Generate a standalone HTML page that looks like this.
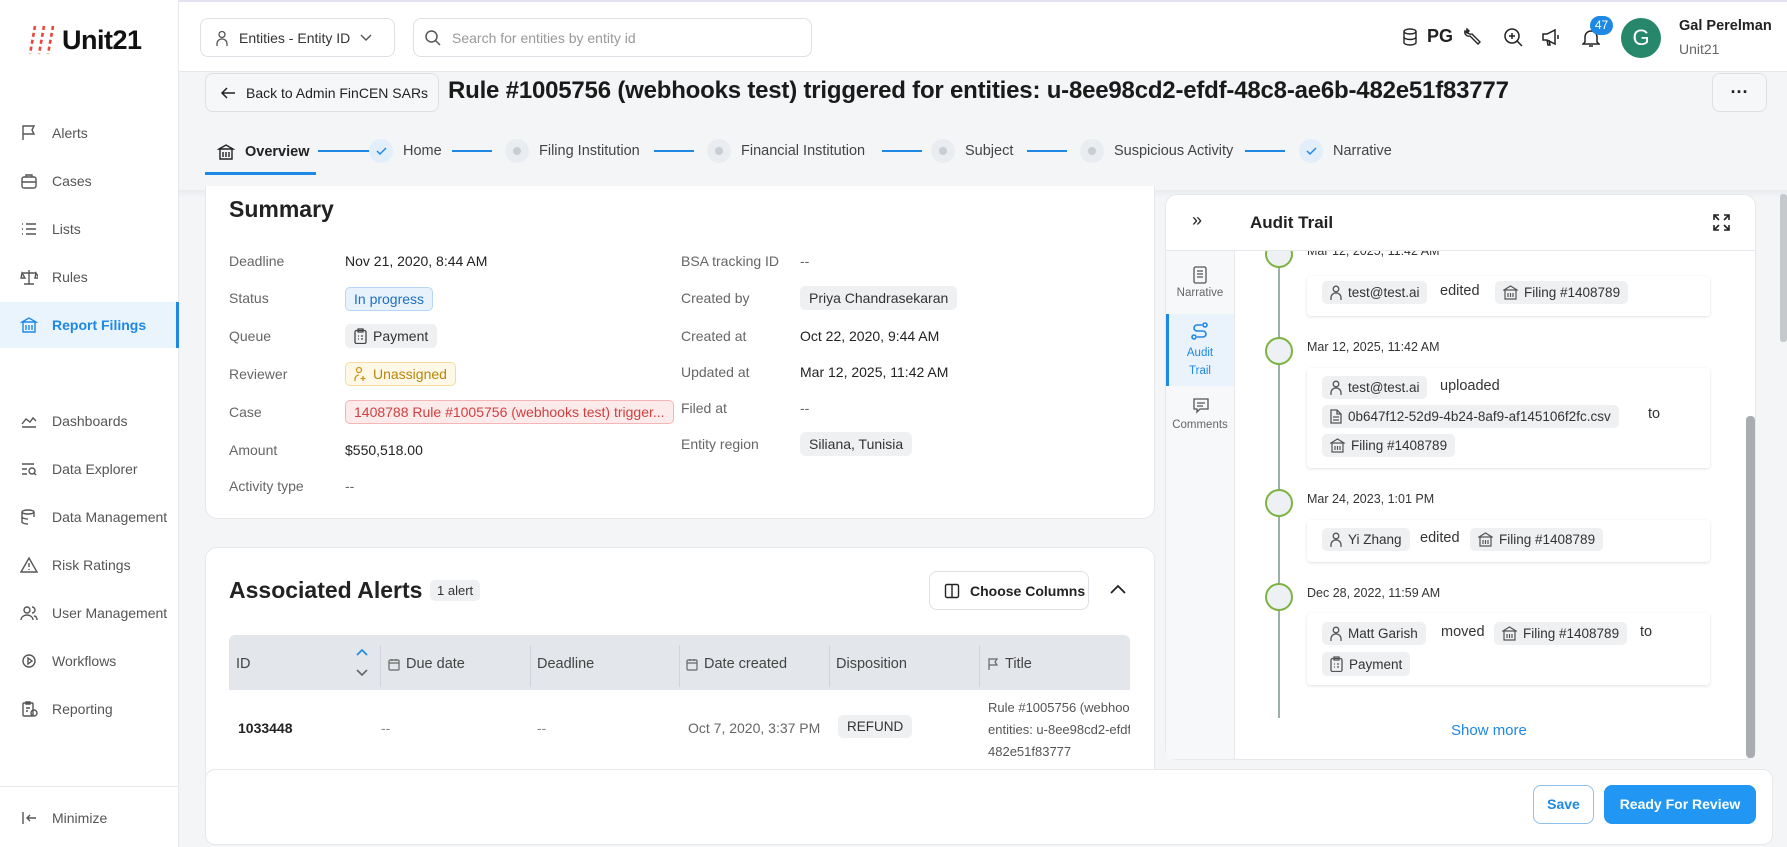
<!DOCTYPE html>
<html><head><meta charset="utf-8"><style>
*{box-sizing:border-box;margin:0;padding:0}
body{width:1787px;height:847px;overflow:hidden;font-family:"Liberation Sans",sans-serif;color:#222;background:#f3f5f7;position:relative;font-size:14px}
.abs{position:absolute}
svg{display:block}
.side{left:0;top:0;width:179px;height:847px;background:#fff;border-right:1px solid #e6e8ec}
.nav{position:absolute;left:0;width:179px;height:46px;display:flex;align-items:center;padding-left:20px;color:#555;font-size:14px}
.nav svg{margin-right:14px}
.nav.act{background:#eaf4fd;color:#1e88e5;font-weight:bold;border-right:3px solid #1e88e5}
.top{left:179px;top:0;right:0;height:72px;background:#fff;border-bottom:1px solid #e6e8ec;border-top:2px solid #e4e2f2}
.card{background:#fff;border:1px solid #e6e8ec;border-radius:12px}
.lbl{position:absolute;color:#666;font-size:14px}
.val{position:absolute;color:#222;font-size:14px}
.chip{position:absolute;background:#eef0f2;border-radius:5px;padding:4px 9px;font-size:14px;color:#333;display:flex;align-items:center;gap:6px;white-space:nowrap}
.step{position:absolute;top:139px;height:24px;display:flex;align-items:center;font-size:14.5px;color:#444}
.sc{width:24px;height:24px;border-radius:50%;background:#e9edf1;display:flex;align-items:center;justify-content:center;margin-right:10px}
.sline{position:absolute;top:150px;height:2px;background:#1e88e5}
.th{position:absolute;top:656px;font-size:14.5px;color:#444;display:flex;align-items:center;gap:6px}
.tsep{position:absolute;top:645px;width:1px;height:42px;background:#cfd4da}
.tl{position:absolute;width:28px;height:28px;border-radius:50%;border:2.5px solid #7cb342;background:#eef1f4;left:1265px}
.ent{position:absolute;left:1307px;width:403px;background:#fff;box-shadow:0 1px 3px rgba(0,0,0,.12);border-radius:4px}
.date{position:absolute;left:1307px;font-size:12.5px;color:#333}
.ech{position:absolute;background:#eef0f2;border-radius:5px;padding:4px 8px;font-size:13.5px;color:#333;display:flex;align-items:center;gap:6px;white-space:nowrap}
.etx{position:absolute;font-size:14.5px;color:#333}
</style></head><body>

<!-- sidebar -->
<div class="abs side">
  <div class="abs" style="left:28px;top:24px;display:flex;align-items:center">
    <svg width="32" height="32" viewBox="0 0 32 32"><g stroke="#e8473a" stroke-width="2.6" stroke-dasharray="4 3"><line x1="7" y1="2" x2="2" y2="30"/><line x1="16" y1="2" x2="11" y2="30"/><line x1="25" y1="2" x2="20" y2="30"/></g></svg>
    <span style="font-size:27px;font-weight:bold;color:#111;margin-left:2px;letter-spacing:-.5px">Unit21</span>
  </div>
  <div class="nav" style="top:110px"><svg width="18" height="18" viewBox="0 0 18 18" fill="none" stroke="#555" stroke-width="1.4"><path d="M3 16V2h11l-2 4 2 4H3"/></svg>Alerts</div>
  <div class="nav" style="top:158px"><svg width="18" height="18" viewBox="0 0 18 18" fill="none" stroke="#555" stroke-width="1.4"><rect x="2" y="5" width="14" height="11" rx="2"/><path d="M6 5V3h6v2M2 10h14"/></svg>Cases</div>
  <div class="nav" style="top:206px"><svg width="18" height="18" viewBox="0 0 18 18" fill="none" stroke="#555" stroke-width="1.4"><path d="M6 4h10M6 9h10M6 14h10M2 4h1M2 9h1M2 14h1"/></svg>Lists</div>
  <div class="nav" style="top:254px"><svg width="18" height="18" viewBox="0 0 18 18" fill="none" stroke="#555" stroke-width="1.4"><path d="M9 2v14M4 16h10M2 5h14M2 5l-1 5h4zM16 5l-1 5h4z"/></svg>Rules</div>
  <div class="nav act" style="top:302px"><svg width="18" height="18" viewBox="0 0 18 18" fill="none" stroke="#1e88e5" stroke-width="1.4"><path d="M2 6L9 2l7 4zM3 6h12v10H3zM6 9v5M9 9v5M12 9v5"/></svg>Report Filings</div>
  <div class="nav" style="top:398px"><svg width="18" height="18" viewBox="0 0 18 18" fill="none" stroke="#555" stroke-width="1.4"><path d="M2 12l4-5 4 3 3-4 3 3M2 15h14"/></svg>Dashboards</div>
  <div class="nav" style="top:446px"><svg width="18" height="18" viewBox="0 0 18 18" fill="none" stroke="#555" stroke-width="1.4"><path d="M2 4h12M2 9h5M2 14h5"/><circle cx="12" cy="11" r="3"/><path d="M14 13l2 2"/></svg>Data Explorer</div>
  <div class="nav" style="top:494px"><svg width="18" height="18" viewBox="0 0 18 18" fill="none" stroke="#555" stroke-width="1.4"><ellipse cx="8" cy="4" rx="6" ry="2"/><path d="M2 4v10c0 1 3 2 6 2M14 4v5M2 9c0 1 3 2 6 2"/></svg>Data Management</div>
  <div class="nav" style="top:542px"><svg width="18" height="18" viewBox="0 0 18 18" fill="none" stroke="#555" stroke-width="1.4"><path d="M9 2l8 14H1z M9 7v4M9 13v1"/></svg>Risk Ratings</div>
  <div class="nav" style="top:590px"><svg width="18" height="18" viewBox="0 0 18 18" fill="none" stroke="#555" stroke-width="1.4"><circle cx="7" cy="6" r="3"/><path d="M1 16c0-3 3-5 6-5s6 2 6 5M12 3a3 3 0 010 6M17 16c0-2-1-4-3-4"/></svg>User Management</div>
  <div class="nav" style="top:638px"><svg width="18" height="18" viewBox="0 0 18 18" fill="none" stroke="#555" stroke-width="1.4"><circle cx="9" cy="9" r="6"/><path d="M8 6v6l4-3z"/></svg>Workflows</div>
  <div class="nav" style="top:686px"><svg width="18" height="18" viewBox="0 0 18 18" fill="none" stroke="#555" stroke-width="1.4"><rect x="3" y="3" width="10" height="13" rx="1"/><path d="M6 2h4v2H6zM6 8h4M6 11h2"/><circle cx="14" cy="13" r="3"/></svg>Reporting</div>
  <div class="abs" style="left:0;top:786px;width:179px;height:1px;background:#e6e8ec"></div>
  <div class="nav" style="top:795px"><svg width="18" height="18" viewBox="0 0 18 18" fill="none" stroke="#555" stroke-width="1.4"><path d="M3 3v12M16 9H7M10 6L7 9l3 3"/></svg>Minimize</div>
</div>

<!-- header -->
<div class="abs top"></div>
<div class="abs" style="left:200px;top:18px;width:195px;height:39px;border:1px solid #dde0e4;border-radius:8px;background:#fff;display:flex;align-items:center;padding-left:14px;font-size:14px;color:#333">
  <svg width="14" height="16" viewBox="0 0 14 16" fill="none" stroke="#555" stroke-width="1.3"><circle cx="7" cy="4.5" r="3"/><path d="M2 16v-2c0-3 2-5 5-5s5 2 5 5v2"/></svg>
  <span style="margin-left:10px">Entities - Entity ID</span>
  <svg style="margin-left:10px" width="12" height="8" viewBox="0 0 12 8" fill="none" stroke="#555" stroke-width="1.4"><path d="M1 1l5 5 5-5"/></svg>
</div>
<div class="abs" style="left:413px;top:18px;width:399px;height:39px;border:1px solid #dde0e4;border-radius:8px;background:#fff;display:flex;align-items:center;padding-left:10px;font-size:14px;color:#999">
  <svg width="18" height="18" viewBox="0 0 18 18" fill="none" stroke="#555" stroke-width="1.5"><circle cx="7.5" cy="7.5" r="5.5"/><path d="M11.5 11.5L16 16"/></svg>
  <span style="margin-left:10px">Search for entities by entity id</span>
</div>
<svg class="abs" style="left:1402px;top:28px" width="16" height="18" viewBox="0 0 16 18" fill="none" stroke="#222" stroke-width="1.4"><ellipse cx="8" cy="3.5" rx="6" ry="2.5"/><path d="M2 3.5v11c0 1.4 2.7 2.5 6 2.5s6-1.1 6-2.5v-11M2 9c0 1.4 2.7 2.5 6 2.5s6-1.1 6-2.5"/></svg>
<div class="abs" style="left:1427px;top:26px;font-size:18px;font-weight:bold;color:#222">PG</div>
<svg class="abs" style="left:1463px;top:27px" width="20" height="20" viewBox="0 0 20 20" fill="none" stroke="#222" stroke-width="1.4"><path d="M4 2a4 4 0 005 5l8 8-2 2-8-8a4 4 0 01-5-5l2 2 2-2z"/></svg>
<svg class="abs" style="left:1502px;top:26px" width="22" height="22" viewBox="0 0 22 22" fill="none" stroke="#222" stroke-width="1.5"><circle cx="10" cy="10" r="7"/><path d="M15 15l5 5M10 7v6M7 10h6"/></svg>
<svg class="abs" style="left:1541px;top:28px" width="20" height="18" viewBox="0 0 20 18" fill="none" stroke="#222" stroke-width="1.5"><path d="M2 6h4l8-4v14l-8-4H2zM6 12l1 5h2l-1-5M17 7v4"/></svg>
<svg class="abs" style="left:1582px;top:28px" width="18" height="20" viewBox="0 0 18 20" fill="none" stroke="#222" stroke-width="1.5"><path d="M3 14V9a6 6 0 0112 0v5l2 2H1zM7 18h4"/></svg>
<div class="abs" style="left:1590px;top:16px;width:23px;height:19px;border-radius:10px;background:#1e88e5;color:#fff;font-size:12px;text-align:center;line-height:19px">47</div>
<div class="abs" style="left:1621px;top:18px;width:40px;height:40px;border-radius:50%;background:#26876b;color:#fff;font-size:22px;text-align:center;line-height:40px">G</div>
<div class="abs" style="left:1679px;top:18px;font-size:14.5px;font-weight:bold;color:#222">Gal Perelman</div>
<div class="abs" style="left:1679px;top:41px;font-size:14px;color:#666">Unit21</div>

<!-- title row -->
<div class="abs" style="left:205px;top:73px;width:234px;height:39px;border:1px solid #dde0e4;border-radius:8px;background:#f6f7f9;display:flex;align-items:center;padding-left:14px;font-size:14px;color:#222">
  <svg width="16" height="14" viewBox="0 0 16 14" fill="none" stroke="#222" stroke-width="1.5"><path d="M15 7H2M7 2L2 7l5 5"/></svg><span style="margin-left:10px">Back to Admin FinCEN SARs</span>
</div>
<div class="abs" style="left:448px;top:77px;font-size:24px;font-weight:bold;color:#1a1a1a;white-space:nowrap;letter-spacing:-.2px">Rule #1005756 (webhooks test) triggered for entities: u-8ee98cd2-efdf-48c8-ae6b-482e51f83777</div>
<div class="abs" style="left:1712px;top:73px;width:55px;height:39px;border:1px solid #dde0e4;border-radius:8px;background:#f6f7f9;text-align:center;font-size:18px;line-height:36px;font-weight:bold">···</div>

<!-- stepper -->
<div class="step" style="left:217px;top:140px;color:#222;font-weight:bold"><svg style="margin-right:10px" width="18" height="18" viewBox="0 0 18 18" fill="none" stroke="#222" stroke-width="1.4"><path d="M2 6L9 2l7 4zM3 6h12v10H3zM6 9v5M9 9v5M12 9v5"/></svg>Overview</div>
<div class="abs" style="left:205px;top:172px;width:111px;height:3px;background:#1e88e5"></div>
<div class="sline" style="left:318px;width:56px"></div>
<div class="step" style="left:369px"><div class="sc" style="background:#e3eefb"><svg width="11" height="9" viewBox="0 0 11 9" fill="none" stroke="#1e88e5" stroke-width="1.5"><path d="M1 4l3 3 6-6"/></svg></div>Home</div>
<div class="sline" style="left:452px;width:40px"></div>
<div class="step" style="left:505px"><div class="sc"><div style="width:8px;height:8px;border-radius:50%;background:#c8cdd2"></div></div>Filing Institution</div>
<div class="sline" style="left:654px;width:40px"></div>
<div class="step" style="left:707px"><div class="sc"><div style="width:8px;height:8px;border-radius:50%;background:#c8cdd2"></div></div>Financial Institution</div>
<div class="sline" style="left:882px;width:40px"></div>
<div class="step" style="left:931px"><div class="sc"><div style="width:8px;height:8px;border-radius:50%;background:#c8cdd2"></div></div>Subject</div>
<div class="sline" style="left:1027px;width:40px"></div>
<div class="step" style="left:1080px"><div class="sc"><div style="width:8px;height:8px;border-radius:50%;background:#c8cdd2"></div></div>Suspicious Activity</div>
<div class="sline" style="left:1245px;width:40px"></div>
<div class="step" style="left:1299px"><div class="sc" style="background:#e3eefb"><svg width="11" height="9" viewBox="0 0 11 9" fill="none" stroke="#1e88e5" stroke-width="1.5"><path d="M1 4l3 3 6-6"/></svg></div>Narrative</div>
<div class="abs" style="left:179px;top:190px;width:1608px;height:8px;background:linear-gradient(#e9ecef,#f3f5f7)"></div>

<!-- summary card -->
<div class="abs card" style="left:205px;top:186px;width:950px;height:333px;border-top:none;border-radius:0 0 12px 12px"></div>
<div class="abs" style="left:229px;top:196px;font-size:23px;font-weight:bold;color:#222">Summary</div>
<div class="lbl" style="left:229px;top:253px">Deadline</div><div class="val" style="left:345px;top:253px">Nov 21, 2020, 8:44 AM</div>
<div class="lbl" style="left:229px;top:290px">Status</div><div class="chip" style="left:345px;top:287px;background:#e8f2fd;border:1px solid #b7d6f5;color:#1e6fc0;padding:3px 8px">In progress</div>
<div class="lbl" style="left:229px;top:328px">Queue</div><div class="chip" style="left:345px;top:324px"><svg width="13" height="16" viewBox="0 0 13 16" fill="none" stroke="#444" stroke-width="1.3"><rect x="1" y="2.5" width="11" height="13" rx="1.5"/><path d="M4 1h5v3H4zM4 8h1M4 11h1M7 8h2M7 11h2"/></svg>Payment</div>
<div class="lbl" style="left:229px;top:366px">Reviewer</div><div class="chip" style="left:345px;top:362px;background:#fff8e6;border:1px solid #f5dc9c;color:#b8860b;padding:3px 8px"><svg width="13" height="16" viewBox="0 0 13 16" fill="none" stroke="#c9961a" stroke-width="1.3"><circle cx="5" cy="4" r="2.5"/><path d="M1 15v-2c0-2 2-4 4-4M9 10v5M6.5 12.5h5"/></svg>Unassigned</div>
<div class="lbl" style="left:229px;top:404px">Case</div><div class="chip" style="left:345px;top:400px;background:#fdeaea;border:1px solid #f2b6b6;color:#d04040;padding:3px 8px">1408788 Rule #1005756 (webhooks test) trigger...</div>
<div class="lbl" style="left:229px;top:442px">Amount</div><div class="val" style="left:345px;top:442px">$550,518.00</div>
<div class="lbl" style="left:229px;top:478px">Activity type</div><div class="lbl" style="left:345px;top:478px">--</div>
<div class="lbl" style="left:681px;top:253px">BSA tracking ID</div><div class="lbl" style="left:800px;top:253px">--</div>
<div class="lbl" style="left:681px;top:290px">Created by</div><div class="chip" style="left:800px;top:286px">Priya Chandrasekaran</div>
<div class="lbl" style="left:681px;top:328px">Created at</div><div class="val" style="left:800px;top:328px">Oct 22, 2020, 9:44 AM</div>
<div class="lbl" style="left:681px;top:364px">Updated at</div><div class="val" style="left:800px;top:364px">Mar 12, 2025, 11:42 AM</div>
<div class="lbl" style="left:681px;top:400px">Filed at</div><div class="lbl" style="left:800px;top:400px">--</div>
<div class="lbl" style="left:681px;top:436px">Entity region</div><div class="chip" style="left:800px;top:432px">Siliana, Tunisia</div>

<!-- associated alerts -->
<div class="abs card" style="left:205px;top:547px;width:950px;height:240px"></div>
<div class="abs" style="left:229px;top:577px;font-size:23px;font-weight:bold;color:#222">Associated Alerts</div>
<div class="chip" style="left:430px;top:580px;font-size:13px;padding:3px 7px">1 alert</div>
<div class="abs" style="left:929px;top:571px;width:160px;height:39px;border:1px solid #dde0e4;border-radius:8px;background:#fff;display:flex;align-items:center;padding-left:14px;font-size:14px;font-weight:bold;color:#222"><svg width="16" height="16" viewBox="0 0 16 16" fill="none" stroke="#222" stroke-width="1.4"><rect x="1.5" y="1.5" width="13" height="13" rx="1.5"/><path d="M8 1.5v13"/></svg><span style="margin-left:10px">Choose Columns</span></div>
<svg class="abs" style="left:1110px;top:584px" width="16" height="10" viewBox="0 0 16 10" fill="none" stroke="#222" stroke-width="1.8"><path d="M1 9l7-7 7 7"/></svg>
<div class="abs" style="left:229px;top:635px;width:901px;height:55px;background:#e3e6ea;border-radius:6px 6px 0 0"></div>
<div class="abs" style="left:229px;top:690px;width:901px;height:70px;background:#fff"></div>
<div class="th" style="left:236px">ID</div>
<svg class="abs" style="left:356px;top:648px" width="12" height="30" viewBox="0 0 12 30" fill="none" stroke-width="1.6"><path d="M1 7l5-5 5 5" stroke="#1e88e5"/><path d="M1 22l5 5 5-5" stroke="#666"/></svg>
<div class="tsep" style="left:380px"></div><div class="th" style="left:388px"><svg width="12" height="13" viewBox="0 0 12 13" fill="none" stroke="#666" stroke-width="1.2"><rect x="1" y="2" width="10" height="10" rx="1"/><path d="M1 5h10M4 1v2M8 1v2"/></svg>Due date</div>
<div class="tsep" style="left:530px"></div><div class="th" style="left:537px">Deadline</div>
<div class="tsep" style="left:679px"></div><div class="th" style="left:686px"><svg width="12" height="13" viewBox="0 0 12 13" fill="none" stroke="#666" stroke-width="1.2"><rect x="1" y="2" width="10" height="10" rx="1"/><path d="M1 5h10M4 1v2M8 1v2"/></svg>Date created</div>
<div class="tsep" style="left:829px"></div><div class="th" style="left:836px">Disposition</div>
<div class="tsep" style="left:979px"></div><div class="th" style="left:987px"><svg width="12" height="13" viewBox="0 0 12 13" fill="none" stroke="#666" stroke-width="1.2"><path d="M2 12V1h8l-2 3 2 3H2"/></svg>Title</div>
<div class="abs" style="left:238px;top:720px;font-size:14px;font-weight:bold;color:#222">1033448</div>
<div class="abs" style="left:381px;top:720px;color:#888">--</div>
<div class="abs" style="left:537px;top:720px;color:#888">--</div>
<div class="abs" style="left:688px;top:720px;color:#666">Oct 7, 2020, 3:37 PM</div>
<div class="chip" style="left:838px;top:715px;font-size:13.5px">REFUND</div>
<div class="abs" style="left:988px;top:697px;width:142px;overflow:hidden;white-space:nowrap;color:#555;font-size:13px;line-height:22px">Rule #1005756 (webhooks test)<br>entities: u-8ee98cd2-efdf<br>482e51f83777</div>

<!-- audit trail -->
<div class="abs card" style="left:1165px;top:194px;width:591px;height:566px;overflow:hidden"></div>
<div class="abs" style="left:1166px;top:250px;width:69px;height:509px;background:#f7f8fa;border-right:1px solid #e6e8ec"></div>

<div class="abs" style="left:1278px;top:251px;width:2px;height:467px;background:#9bb0a8"></div>
<div class="tl" style="top:240px"></div>
<div class="date" style="top:244px">Mar 12, 2025, 11:42 AM</div>
<div class="tl" style="top:337px"></div>
<div class="tl" style="top:489px"></div>
<div class="tl" style="top:583px"></div>

<!-- audit header drawn over -->
<div class="abs" style="left:1166px;top:195px;width:589px;height:56px;background:#fff;border-bottom:1px solid #e6e8ec;border-radius:12px 12px 0 0"></div>
<div class="abs" style="left:1192px;top:210px;font-size:18px;color:#222">»</div>
<div class="abs" style="left:1250px;top:213px;font-size:17px;font-weight:bold;color:#222">Audit Trail</div>
<svg class="abs" style="left:1713px;top:214px" width="17" height="17" viewBox="0 0 17 17" fill="none" stroke="#222" stroke-width="1.6"><path d="M1 6V1h5M1 1l5 5M16 6V1h-5M16 1l-5 5M1 11v5h5M1 16l5-5M16 11v5h-5M16 16l-5-5"/></svg>

<svg class="abs" style="left:1193px;top:266px" width="14" height="18" viewBox="0 0 14 18" fill="none" stroke="#555" stroke-width="1.3"><rect x="1" y="1" width="12" height="16" rx="1.5"/><path d="M4 5h6M4 8h6M4 11h6"/></svg>
<div class="abs" style="left:1166px;top:287px;width:68px;text-align:center;font-size:11.5px;color:#666">Narrative</div>
<div class="abs" style="left:1166px;top:314px;width:68px;height:72px;background:#eaf3fc;border-left:3px solid #1e88e5"></div>
<svg class="abs" style="left:1191px;top:322px" width="18" height="18" viewBox="0 0 18 18" fill="none" stroke="#1e88e5" stroke-width="1.6"><circle cx="14" cy="3" r="2"/><circle cx="3" cy="15" r="2"/><path d="M11 3H6a3 3 0 000 6h6a3 3 0 010 6H6"/></svg>
<div class="abs" style="left:1166px;top:344px;width:68px;text-align:center;font-size:11.5px;color:#1e88e5;line-height:18px">Audit<br>Trail</div>
<svg class="abs" style="left:1193px;top:398px" width="16" height="16" viewBox="0 0 16 16" fill="none" stroke="#555" stroke-width="1.3"><path d="M1 1h14v10H7l-3 3v-3H1z M4 5h8M4 8h6"/></svg>
<div class="abs" style="left:1166px;top:419px;width:68px;text-align:center;font-size:11.5px;color:#666">Comments</div>

<div class="ent" style="top:276px;height:40px"></div>
<div class="ech" style="left:1322px;top:281px"><svg width="12" height="15" viewBox="0 0 12 15" fill="none" stroke="#555" stroke-width="1.3"><circle cx="6" cy="4" r="2.8"/><path d="M1 15v-2c0-3 2-5 5-5s5 2 5 5v2"/></svg>test@test.ai</div>
<div class="etx" style="left:1440px;top:283px">edited</div>
<div class="ech" style="left:1495px;top:281px"><svg width="15" height="15" viewBox="0 0 15 15" fill="none" stroke="#555" stroke-width="1.2"><path d="M1 5L7.5 1 14 5zM2 5h11v9H2zM5 8v4M7.5 8v4M10 8v4"/></svg>Filing #1408789</div>

<div class="date" style="top:340px">Mar 12, 2025, 11:42 AM</div>
<div class="ent" style="top:368px;height:100px"></div>
<div class="ech" style="left:1322px;top:376px"><svg width="12" height="15" viewBox="0 0 12 15" fill="none" stroke="#555" stroke-width="1.3"><circle cx="6" cy="4" r="2.8"/><path d="M1 15v-2c0-3 2-5 5-5s5 2 5 5v2"/></svg>test@test.ai</div>
<div class="etx" style="left:1440px;top:378px">uploaded</div>
<div class="ech" style="left:1322px;top:405px"><svg width="12" height="15" viewBox="0 0 12 15" fill="none" stroke="#555" stroke-width="1.3"><path d="M1 1h6l4 4v9H1zM7 1v4h4M3 8h6M3 11h6"/></svg>0b647f12-52d9-4b24-8af9-af145106f2fc.csv</div>
<div class="etx" style="left:1648px;top:406px">to</div>
<div class="ech" style="left:1322px;top:434px"><svg width="15" height="15" viewBox="0 0 15 15" fill="none" stroke="#555" stroke-width="1.2"><path d="M1 5L7.5 1 14 5zM2 5h11v9H2zM5 8v4M7.5 8v4M10 8v4"/></svg>Filing #1408789</div>

<div class="date" style="top:492px">Mar 24, 2023, 1:01 PM</div>
<div class="ent" style="top:520px;height:42px"></div>
<div class="ech" style="left:1322px;top:528px"><svg width="12" height="15" viewBox="0 0 12 15" fill="none" stroke="#555" stroke-width="1.3"><circle cx="6" cy="4" r="2.8"/><path d="M1 15v-2c0-3 2-5 5-5s5 2 5 5v2"/></svg>Yi Zhang</div>
<div class="etx" style="left:1420px;top:530px">edited</div>
<div class="ech" style="left:1470px;top:528px"><svg width="15" height="15" viewBox="0 0 15 15" fill="none" stroke="#555" stroke-width="1.2"><path d="M1 5L7.5 1 14 5zM2 5h11v9H2zM5 8v4M7.5 8v4M10 8v4"/></svg>Filing #1408789</div>

<div class="date" style="top:586px">Dec 28, 2022, 11:59 AM</div>
<div class="ent" style="top:613px;height:72px"></div>
<div class="ech" style="left:1322px;top:622px"><svg width="12" height="15" viewBox="0 0 12 15" fill="none" stroke="#555" stroke-width="1.3"><circle cx="6" cy="4" r="2.8"/><path d="M1 15v-2c0-3 2-5 5-5s5 2 5 5v2"/></svg>Matt Garish</div>
<div class="etx" style="left:1441px;top:624px">moved</div>
<div class="ech" style="left:1494px;top:622px"><svg width="15" height="15" viewBox="0 0 15 15" fill="none" stroke="#555" stroke-width="1.2"><path d="M1 5L7.5 1 14 5zM2 5h11v9H2zM5 8v4M7.5 8v4M10 8v4"/></svg>Filing #1408789</div>
<div class="etx" style="left:1640px;top:624px">to</div>
<div class="ech" style="left:1322px;top:652px"><svg width="13" height="16" viewBox="0 0 13 16" fill="none" stroke="#555" stroke-width="1.3"><rect x="1" y="2.5" width="11" height="13" rx="1.5"/><path d="M4 1h5v3H4zM4 8h1M4 11h1M7 8h2M7 11h2"/></svg>Payment</div>
<div class="abs" style="left:1451px;top:722px;font-size:15px;color:#1e88e5">Show more</div>
<div class="abs" style="left:1746px;top:416px;width:9px;height:342px;background:#a9adb2;border-radius:4px"></div>
<div class="abs" style="left:1780px;top:194px;width:7px;height:148px;background:#c5c8cc;border-radius:3px"></div>

<!-- bottom bar -->
<div class="abs card" style="left:205px;top:769px;width:1568px;height:76px;border-radius:10px"></div>
<div class="abs" style="left:1533px;top:785px;width:61px;height:39px;border:1px solid #8fc1ee;border-radius:8px;background:#fff;color:#1e88e5;font-size:14px;font-weight:bold;text-align:center;line-height:37px">Save</div>
<div class="abs" style="left:1604px;top:785px;width:152px;height:39px;border-radius:8px;background:#2196f3;color:#fff;font-size:14px;font-weight:bold;text-align:center;line-height:39px">Ready For Review</div>
</body></html>
